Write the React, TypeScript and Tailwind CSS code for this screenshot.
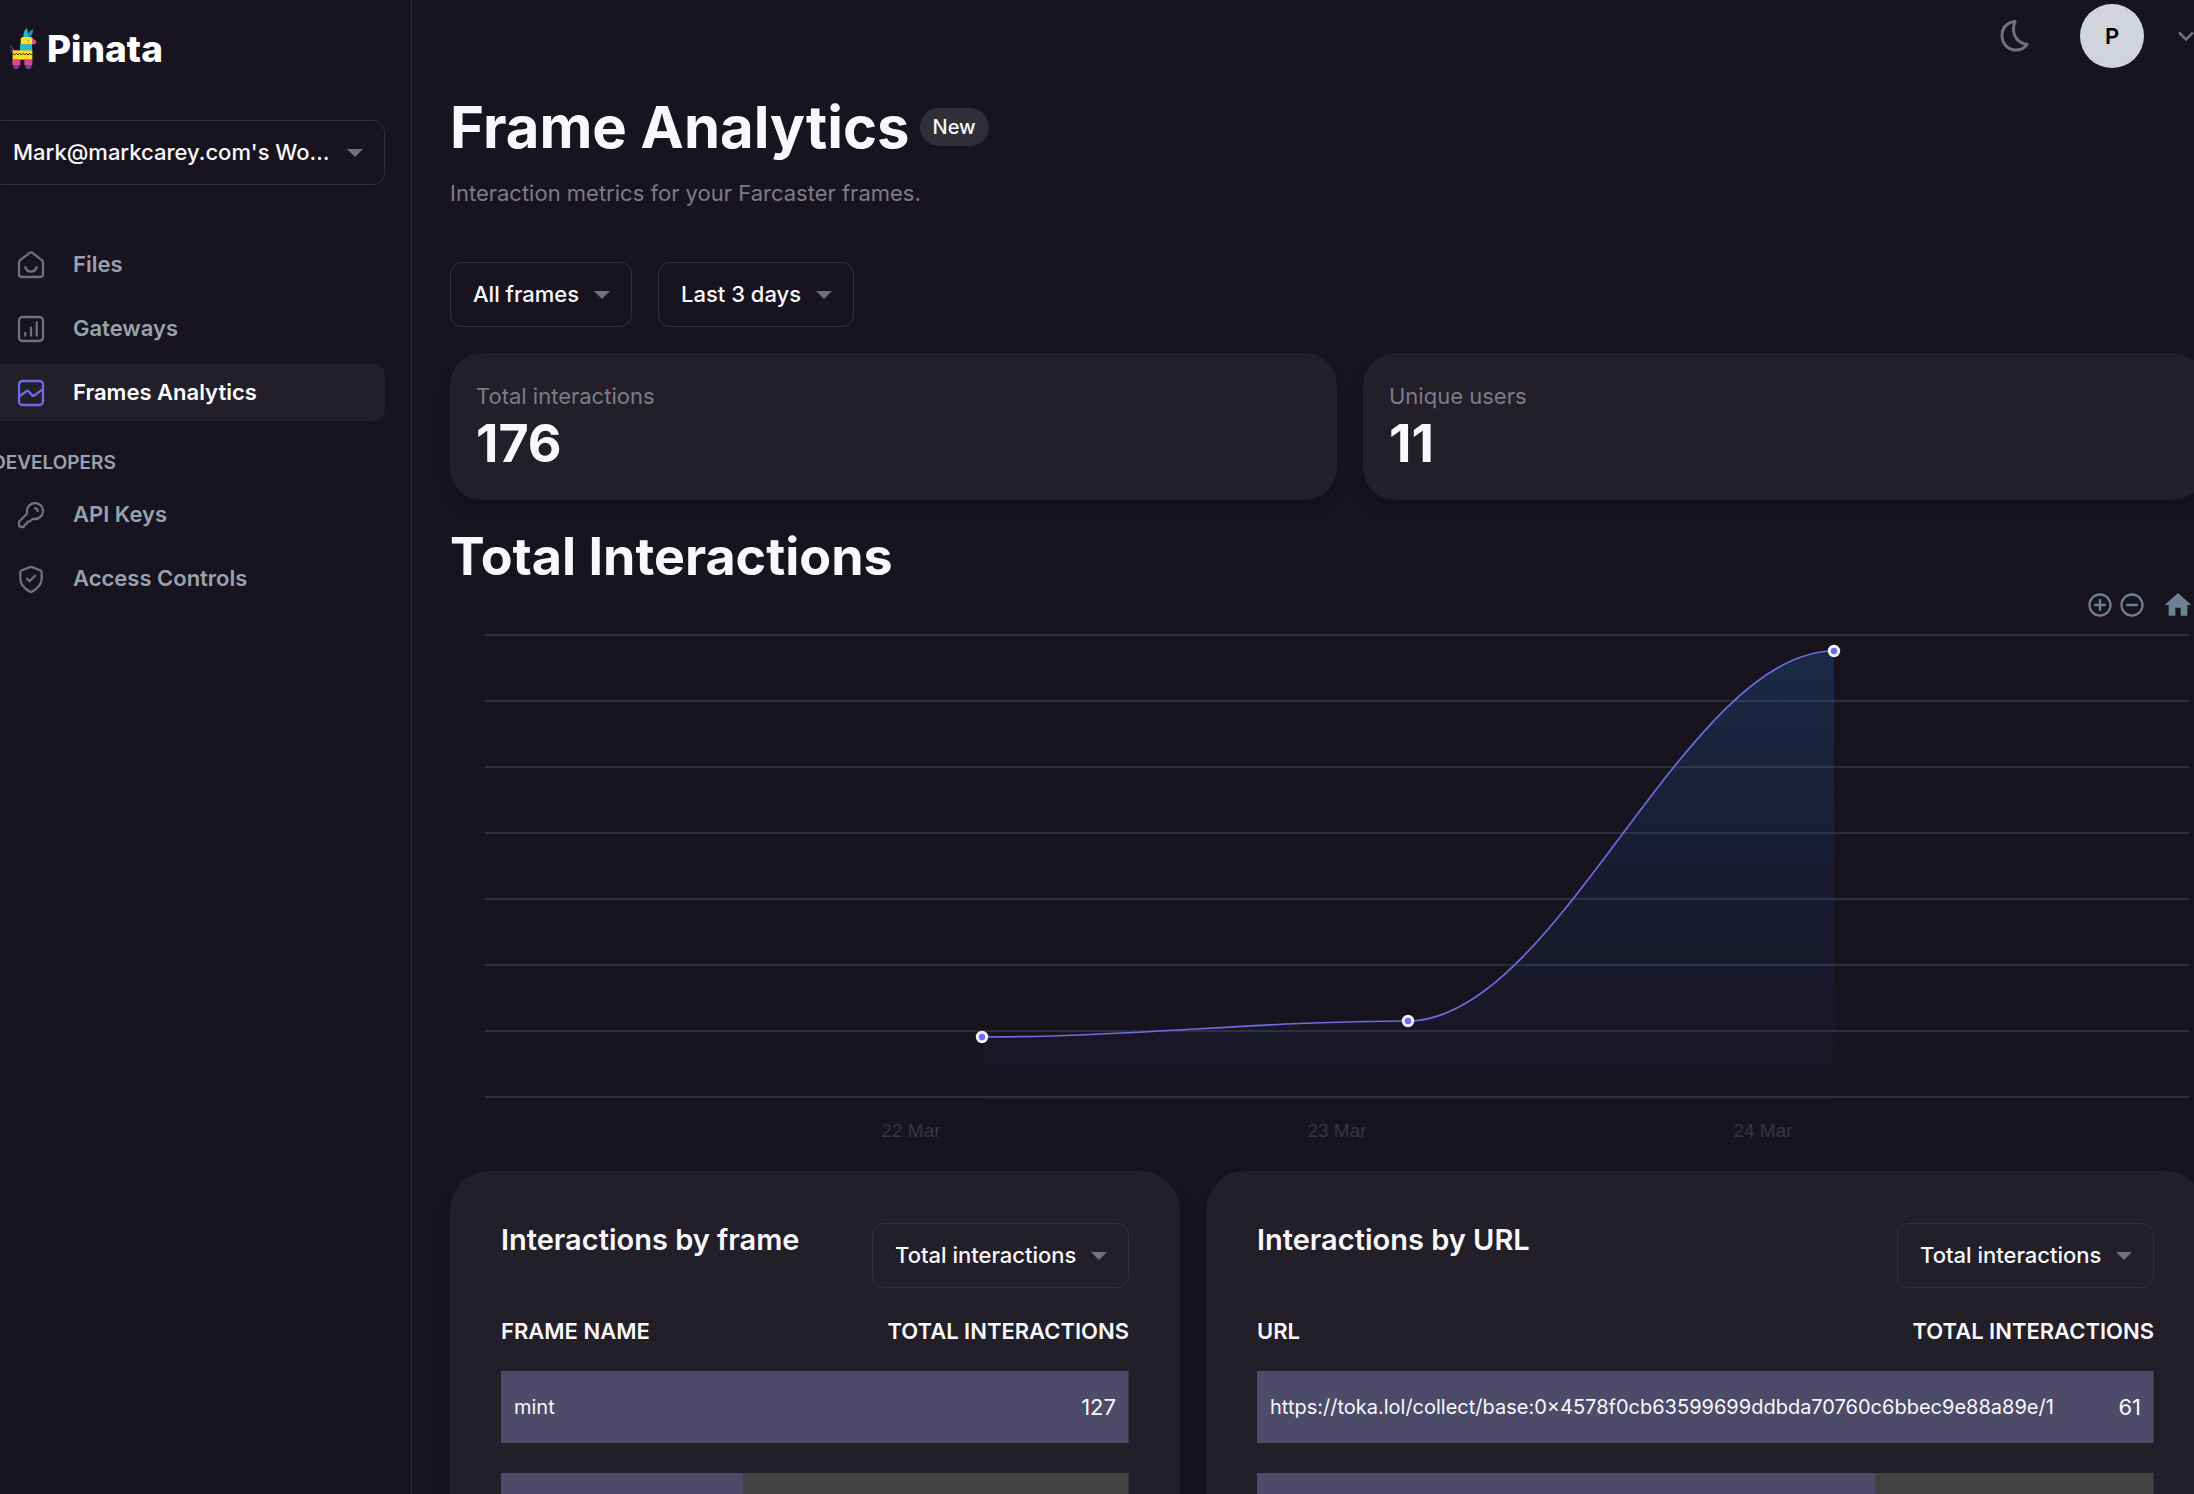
import type { ReactNode } from "react";

function Caret() {
  return (
    <svg viewBox="0 0 16 8" className="pointer-events-none absolute right-[22px] h-2 w-4 fill-[#6b7280]" aria-hidden="true">
      <path d="M0 0h16L8 8z" />
    </svg>
  );
}

function Dropdown({ label, value, wide = false }: { label: string; value: string; wide?: boolean }) {
  return (
    <div className={wide ? "relative flex w-full items-center" : "relative flex shrink-0 items-center"}>
      <select
        aria-label={label}
        defaultValue={value}
        className="h-[65px] w-full appearance-none rounded-xl border border-[#2e303e] bg-transparent pr-[51px] pl-[22px] text-[22px] font-medium text-[#f8f8fc]"
      >
        <option>{value}</option>
      </select>
      <Caret />
    </div>
  );
}

function PinataLogo() {
  return (
    <svg viewBox="0 0 84 126" className="h-[42px] w-7" aria-hidden="true">
      <path d="M14 70C13 62 9 57 2 56M13 66C11 60 10 56 7 53M12 70C8 64 5 64 1 66M12 74C8 70 6 71 5 74" fill="none" stroke="#5b3a8c" strokeWidth="3" />
      <path d="M43 27C43 15 47 5 53 0C57 6 57 17 57 27z" fill="#22b8cf" />
      <path d="M55 27C56 16 62 8 72 4C72 14 70 21 64 27z" fill="#1597ad" />
      <path d="M35 50V35C35 30 38 27 43 27H65C69 27 72 30 72 34V47C70 50 66 50 62 50z" fill="#fde01a" />
      <path d="M69 34C75 32 82 35 82 41C82 47 77 50 70 49z" fill="#d6478f" />
      <circle cx="58" cy="38" r="3" fill="#fff" />
      <circle cx="58" cy="38" r="1.8" fill="#2b2030" />
      <path d="M33 49H69L70 68H33z" fill="#22b8cf" />
      <path d="M11 67H70V95H11z" fill="#fde01a" />
      <path d="M12 77l5 4 5-5 5 5 5-5 5 5 5-5 5 5 5-5 5 5 5-5 5 5 3-3" fill="none" stroke="#231f20" strokeWidth="3" />
      <path d="M10 95H34V111H10zM46 95H70V111H46z" fill="#d6478f" />
      <path d="M12 111H32C31 119 28 124 21 124C15 124 13 119 12 111zM48 111H68C68 119 65 124 58 124C51 124 49 119 48 111z" fill="#6b3f9e" />
    </svg>
  );
}

function StrokeIcon({ children, active = false }: { children: ReactNode; active?: boolean }) {
  return (
    <svg
      viewBox="0 0 24 24"
      className={active ? "size-8 stroke-[#6f6be8]" : "size-8 stroke-[#6b7280]"}
      fill="none"
      strokeWidth="1.7"
      strokeLinecap="round"
      strokeLinejoin="round"
      aria-hidden="true"
    >
      {children}
    </svg>
  );
}

function NavItem({ label, icon, active = false }: { label: string; icon: ReactNode; active?: boolean }) {
  return (
    <a
      href="#"
      aria-current={active ? "page" : undefined}
      className={
        active
          ? "flex h-[57px] items-center gap-[26px] rounded-xl bg-[#221f29] pl-[25px] text-[22px] font-semibold text-white"
          : "flex h-[57px] items-center gap-[26px] rounded-xl pl-[25px] text-[22px] font-semibold text-gray-400"
      }
    >
      <StrokeIcon active={active}>{icon}</StrokeIcon>
      {label}
    </a>
  );
}

function Sidebar() {
  return (
    <aside className="-ml-9 w-[448px] shrink-0 border-r border-[#2b2933] px-[26px] pt-7">
      <a href="#" className="flex h-[42px] items-center gap-[10px] pl-[19px] text-[37px] leading-[44px] font-extrabold text-white">
        <PinataLogo />
        Pinata
      </a>
      <div className="mt-[50px]">
        <Dropdown label="Workspace" value="Mark@markcarey.com's Wo…" wide />
      </div>
      <nav className="mt-[51px] flex flex-col gap-[7px]">
        <NavItem
          label="Files"
          icon={
            <>
              <path d="M3 10.3c0-.8.3-1.4.9-1.9l7-5.5a1.8 1.8 0 0 1 2.2 0l7 5.5c.6.5.9 1.1.9 1.9V19a2 2 0 0 1-2 2H5a2 2 0 0 1-2-2z" />
              <path d="M7.8 13.6c.5 1.9 2.2 3.3 4.2 3.3s3.700-1.400 4.200-3.300" />
            </>
          }
        />
        <NavItem
          label="Gateways"
          icon={
            <>
              <rect x="3" y="3" width="18" height="18" rx="2.600" />
              <path d="M7.700 15v2M12 11v6M16.300 7v10" />
            </>
          }
        />
        <NavItem
          label="Frames Analytics"
          active
          icon={
            <>
              <rect x="3" y="3" width="18" height="18" rx="2.600" />
              <path d="M3.200 14.600l5.500-4.100a1 1 0 0 1 1.300.100l3 3.200a1 1 0 0 0 1.300.100L20.800 9.300" />
            </>
          }
        />
        <h2 className="mt-[23px] mb-1 pl-[2px] text-[19px] leading-6 font-semibold text-gray-400 uppercase">Developers</h2>
        <NavItem
          label="API Keys"
          icon={
            <>
              <path d="M17 9a2 2 0 0 0-2-2" />
              <path d="M15 15a6 6 0 1 0-6-6c0 .3 0 .5.100.8.100.9 0 1.100-.5 1.600l-5.100 5.100c-.400.400-.5.600-.5 1.200v1.700c0 1.100.300 1.600 1.600 1.600H6a1 1 0 0 0 1-1 1 1 0 0 1 1-1 1 1 0 0 0 1-1 1 1 0 0 1 1-1h.600c.300 0 .5-.100.700-.300l1.300-1.300c.5-.5.700-.600 1.600-.5.300.100.500.100.800.100z" />
            </>
          }
        />
        <NavItem
          label="Access Controls"
          icon={
            <>
              <path d="M9 11.700l2 2 4-4.200" />
              <path d="M20 12c0 4.900-5.400 8.500-7.300 9.600-.5.300-.9.300-1.400 0C9.400 20.500 4 16.900 4 12V7.200c0-1 .400-1.500 1.300-1.800l5.900-2.300c.5-.2 1.100-.2 1.600 0l5.900 2.300c.9.300 1.300.8 1.300 1.800z" />
            </>
          }
        />
      </nav>
    </aside>
  );
}

function TopBar() {
  return (
    <header className="flex h-[72px] items-center justify-end pr-[11px]">
      <button type="button" aria-label="Toggle dark mode">
        <svg viewBox="0 0 32 34" className="h-[34px] w-8" fill="none" stroke="#6b7280" strokeWidth="3" strokeLinejoin="round" aria-hidden="true">
          <path d="M16 2.500C8 3 3 9 3 16.500 3 24.500 9 31 16.500 31c5 0 9-2 11.500-5.700C19.500 24 14.500 18 14.500 10c0-2.800.5-5 1.500-7.500z" />
        </svg>
      </button>
      <button type="button" className="ml-[49px] flex size-16 items-center justify-center rounded-full bg-[#d1d5db] text-[22px] font-semibold text-black">
        P
      </button>
      <button type="button" aria-label="Account menu" className="ml-[34px]">
        <svg viewBox="0 0 16 16" className="size-4" fill="none" stroke="#6b7280" strokeWidth="2.500" aria-hidden="true">
          <path d="M1 4.500l7 7 7-7" />
        </svg>
      </button>
    </header>
  );
}

function Stat({ label, value }: { label: string; value: number }) {
  return (
    <div className="rounded-[32px] bg-[#221f29] px-[26px] pt-[27px] pb-6 shadow-lg shadow-black/15">
      <p className="text-[22px] leading-8 text-[#7d7b84]">{label}</p>
      <p className="text-[52px] leading-[64px] font-bold text-[#f8f8fc]">{value}</p>
    </div>
  );
}

const gridLines = [13, 79, 145, 211, 277, 343, 409, 475];
const points = [
  { x: 532, y: 415 },
  { x: 958, y: 399 },
  { x: 1384, y: 29 },
];
const days = [
  { x: 461, label: "22 Mar" },
  { x: 887, label: "23 Mar" },
  { x: 1313, label: "24 Mar" },
];
const curve = "M532 415C681 415 809 399 958 399C1107 399 1235 29 1384 29";

function Chart() {
  return (
    <svg viewBox="0 0 1755 526" className="w-full" role="img" aria-label="Total interactions by day">
      <defs>
        <linearGradient id="area" x1="0" y1="0" x2="0" y2="1">
          <stop offset="0" stopColor="#2070bb" stopOpacity="0.25" />
          <stop offset="0.5" stopColor="#2850b8" stopOpacity="0.12" />
          <stop offset="1" stopColor="#2850b8" stopOpacity="0.02" />
        </linearGradient>
      </defs>
      {gridLines.map((y) => (
        <path key={y} d={`M35 ${y}H1739`} stroke="#2b303f" strokeWidth="2" />
      ))}
      <path d={`${curve}V475H532z`} fill="url(#area)" />
      <path d={curve} fill="none" stroke="#6f6be0" strokeWidth="1.700" />
      {points.map((p) => (
        <circle key={p.x} cx={p.x} cy={p.y} r="4.700" fill="#6f6bf0" stroke="#f0f0fa" strokeWidth="3" />
      ))}
      {days.map((d) => (
        <text key={d.label} x={d.x} y="515" textAnchor="middle" className="fill-[#37353f] font-['Liberation_Sans',sans-serif] text-[19px]">
          {d.label}
        </text>
      ))}
    </svg>
  );
}

function ChartToolbar() {
  return (
    <div className="mb-[2px] flex h-[31px] items-center justify-end gap-1 pr-[11px]">
      <button type="button" aria-label="Zoom in">
        <svg viewBox="0 0 24 24" className="size-7 fill-[#6e8192]" aria-hidden="true">
          <path d="M13 7h-2v4H7v2h4v4h2v-4h4v-2h-4V7zm-1-5C6.480 2 2 6.480 2 12s4.480 10 10 10 10-4.480 10-10S17.520 2 12 2zm0 18c-4.410 0-8-3.590-8-8s3.590-8 8-8 8 3.590 8 8-3.590 8-8 8z" />
        </svg>
      </button>
      <button type="button" aria-label="Zoom out">
        <svg viewBox="0 0 24 24" className="size-7 fill-[#6e8192]" aria-hidden="true">
          <path d="M7 11v2h10v-2H7zm5-9C6.480 2 2 6.480 2 12s4.480 10 10 10 10-4.480 10-10S17.520 2 12 2zm0 18c-4.410 0-8-3.590-8-8s3.590-8 8-8 8 3.590 8 8-3.590 8-8 8z" />
        </svg>
      </button>
      <button type="button" aria-label="Reset zoom" className="ml-3">
        <svg viewBox="0 0 24 24" className="size-8 fill-[#6e8192]" aria-hidden="true">
          <path d="M10 20v-6h4v6h5v-8h3L12 3 2 12h3v8z" />
        </svg>
      </button>
    </div>
  );
}

type Row = { name: string; count: string; share: number };

function Breakdown({ title, column, rows }: { title: string; column: string; rows: Row[] }) {
  return (
    <section className="min-w-0 rounded-[40px] bg-[#221f29] px-[51px] pt-[52px] pb-[52px] shadow-xl shadow-black/15">
      <div className="flex items-start justify-between">
        <h3 className="text-[29px] leading-[34px] font-semibold text-[#f8f8fc]">{title}</h3>
        <Dropdown label={`${title} metric`} value="Total interactions" />
      </div>
      <table className="w-full border-separate border-spacing-x-0 border-spacing-y-[30px] text-[#f8f8fc]">
        <thead>
          <tr className="text-[22px] leading-5 uppercase">
            <th className="p-0 pt-[3px] text-left font-semibold">{column}</th>
            <th className="w-0 p-0 pt-[3px] text-right font-semibold whitespace-nowrap">Total interactions</th>
          </tr>
        </thead>
        <tbody>
          {rows.map((row) => (
            <tr
              key={row.share}
              className="h-[72px]"
              style={{ backgroundImage: `linear-gradient(to right, #4d4b69 ${row.share}%, #424242 ${row.share}%)` }}
            >
              <td className="max-w-0 py-0 pr-0 pl-[13px] text-[20px] whitespace-nowrap">{row.name}</td>
              <td className="py-0 pr-[13px] pl-0 text-right text-[22px]">{row.count}</td>
            </tr>
          ))}
        </tbody>
      </table>
    </section>
  );
}

export default function App() {
  return (
    <div className="flex h-screen overflow-hidden bg-[#18141f] font-['Inter',sans-serif]">
      <Sidebar />
      <main className="-mr-[11px] min-w-0 flex-1 pl-[38px]">
        <TopBar />
        <div className="mt-[23px] flex items-center gap-[10px]">
          <h1 className="text-[58px] leading-[64px] font-bold text-[#f8f8fc]">Frame Analytics</h1>
          <span className="rounded-full bg-[#302e38] px-[13px] text-[20px] leading-[38px] font-medium text-[#f8f8fc]">New</span>
        </div>
        <p className="mt-[18px] text-[22px] leading-8 text-[#7d7b84]">Interaction metrics for your Farcaster frames.</p>
        <div className="mt-[53px] flex gap-[26px]">
          <Dropdown label="Frame" value="All frames" />
          <Dropdown label="Period" value="Last 3 days" />
        </div>
        <div className="mt-[26px] grid grid-cols-[887fr_842fr] gap-[26px]">
          <Stat label="Total interactions" value={176} />
          <Stat label="Unique users" value={11} />
        </div>
        <h2 className="mt-[25px] text-[52px] leading-[64px] font-bold text-[#f8f8fc]">Total Interactions</h2>
        <ChartToolbar />
        <Chart />
        <div className="mt-[23px] grid grid-cols-[730fr_999fr] gap-[26px]">
          <Breakdown
            title="Interactions by frame"
            column="Frame name"
            rows={[
              { name: "mint", count: "127", share: 100 },
              { name: "", count: "", share: 38.6 },
            ]}
          />
          <Breakdown
            title="Interactions by URL"
            column="URL"
            rows={[
              { name: "https://toka.lol/collect/base:0×4578f0cb63599699ddbda70760c6bbec9e88a89e/1", count: "61", share: 100 },
              { name: "", count: "", share: 68.9 },
            ]}
          />
        </div>
      </main>
    </div>
  );
}
